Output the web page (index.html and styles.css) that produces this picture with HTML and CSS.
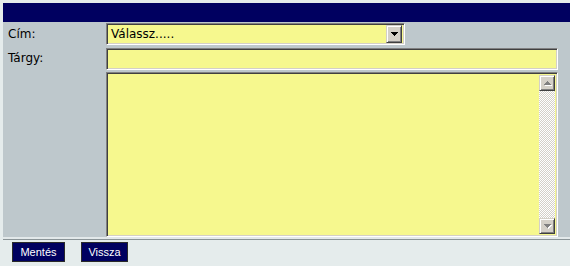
FILE: index.html
```html
<!DOCTYPE html>
<html lang="hu">
<head>
    <meta charset="UTF-8">
    <title>Új üzenet</title>
    <link rel="stylesheet" href="styles.css">
</head>
<body>
    <div class="titlebar"></div>

    <div class="panel">
        <label class="label">Cím:</label>
        <div class="field select-box">
            <span class="value">Válassz.....</span>
            <span class="drop-btn">
                <svg width="7" height="4" viewBox="0 0 7 4"><path d="M0 0h7v1h-1v1h-1v1h-1v1h-1v-1h-1v-1h-1v-1h-1z" fill="#000"/></svg>
            </span>
        </div>

        <label class="label">Tárgy:</label>
        <input class="field text-input" type="text">

        <span></span>
        <div class="field memo">
            <textarea class="memo-text"></textarea>
            <div class="scrollbar">
                <span class="sb-btn">
                    <svg width="7" height="4" viewBox="0 0 7 4"><path d="M3 0h1v1h1v1h1v1h1v1h-7v-1h1v-1h1v-1h1z" fill="#808080"/></svg>
                </span>
                <span class="sb-track"></span>
                <span class="sb-btn">
                    <svg width="7" height="4" viewBox="0 0 7 4"><path d="M0 0h7v1h-1v1h-1v1h-1v1h-1v-1h-1v-1h-1v-1h-1z" fill="#808080"/></svg>
                </span>
            </div>
        </div>
    </div>

    <div class="divider"></div>

    <div class="actions">
        <button class="nav-button save">Mentés</button>
        <button class="nav-button back">Vissza</button>
    </div>
</body>
</html>
```

FILE: styles.css
```css
:root {
    --navy: #000060;
    --panel: #bec8cc;
    --page: #e5ecec;
    --field: #f6f88e;
    --face: #d4d0c8;
}

* {
    margin: 0;
    padding: 0;
    box-sizing: border-box;
}

body {
    background: var(--page);
    padding: 3px 0 0 3px;
    font-family: "DejaVu Sans", Verdana, sans-serif;
    font-size: 12px;
    color: #000;
}

.titlebar {
    height: 19px;
    background: var(--navy);
}

.panel {
    background: var(--panel);
    display: grid;
    grid-template-columns: 103px 1fr;
    padding: 1px 12px 0 0;
}

.label {
    align-self: center;
    padding-left: 5px;
}

/* sunken field, classic look */
.field {
    background: var(--field);
    border: 1px solid;
    border-color: #808080 #fff #fff #808080;
    box-shadow: inset 1px 1px #404040, inset -1px -1px var(--face);
}

.select-box {
    width: 299px;
    height: 22px;
    display: flex;
    align-items: center;
    padding: 2px 2px 2px 4px;
}

.select-box .value {
    flex: 1;
}

.drop-btn {
    width: 16px;
    height: 18px;
    background: var(--face);
    border: 1px solid;
    border-color: var(--face) #404040 #404040 var(--face);
    box-shadow: inset 1px 1px #fff, inset -1px -1px #808080;
    display: flex;
    align-items: center;
    justify-content: center;
}

.drop-btn svg {
    display: block;
}

.text-input {
    margin-top: 3px;
    height: 22px;
    width: 100%;
    outline: none;
    font: inherit;
    padding: 0 4px;
}

.memo {
    margin-top: 2px;
    height: 165px;
    display: flex;
    padding: 2px;
}

.memo-text {
    flex: 1;
    border: none;
    background: transparent;
    resize: none;
    outline: none;
    overflow: hidden;
    font: inherit;
}

.scrollbar {
    width: 16px;
    display: flex;
    flex-direction: column;
}

.sb-btn {
    height: 16px;
    background: var(--face);
    border: 1px solid;
    border-color: var(--face) #404040 #404040 var(--face);
    box-shadow: inset 1px 1px #fff, inset -1px -1px #808080;
    display: flex;
    align-items: center;
    justify-content: center;
}

.sb-btn svg {
    display: block;
    filter: drop-shadow(1px 1px 0 #fff);
}

.sb-track {
    flex: 1;
    background: repeating-conic-gradient(var(--face) 0 25%, #fff 0 50%) 0 0 / 2px 2px;
}

.divider {
    border-top: 2px solid #e3e9ea;
    border-bottom: 1px solid #8a9497;
}

.actions {
    display: flex;
    gap: 16px;
    padding: 2px 0 0 9px;
}

.nav-button {
    height: 20px;
    background: var(--navy);
    color: #fff;
    border: 1px solid #2a2a2a;
    font-family: "Liberation Sans", Arial, sans-serif;
    font-size: 11px;
    cursor: pointer;
}

.save {
    width: 53px;
}

.back {
    width: 47px;
}
```
